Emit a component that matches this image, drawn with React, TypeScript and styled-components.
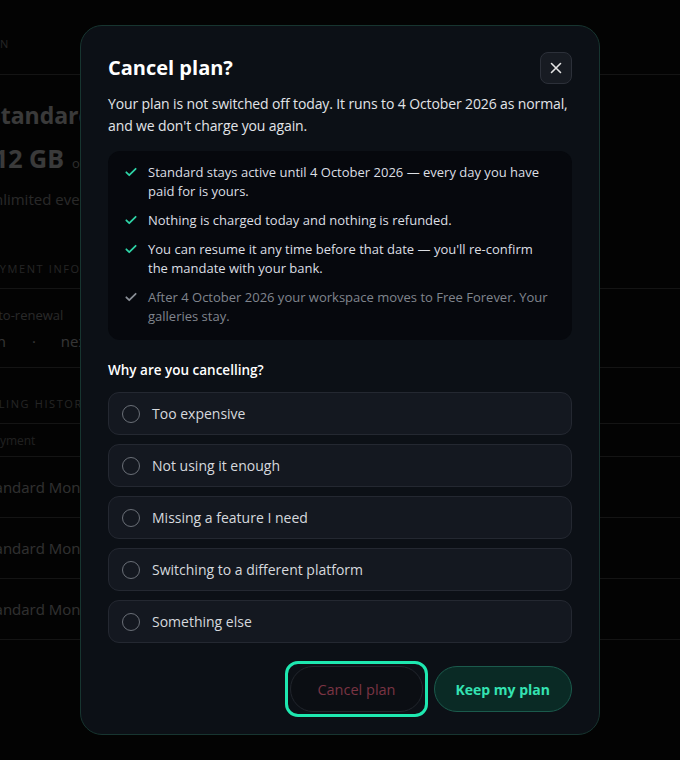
import React, { useState } from 'react';
import styled, { createGlobalStyle } from 'styled-components';

const GlobalStyle = createGlobalStyle`
  html, body {
    margin: 0;
    padding: 0;
    background: #0e0e0e;
    font-family: "Open Sans", "DejaVu Sans", sans-serif;
    -webkit-font-smoothing: antialiased;
  }
  * { box-sizing: border-box; }
`;

/* ---------- page behind the dialog ---------- */

const Page = styled.div`
  width: 680px;
  height: 760px;
  overflow: hidden;
  background: #0e0e0e;
  color: #f2f2f2;
`;

const Section = styled.section`
  border-bottom: 1px solid #555;
`;

const SectionLabel = styled.div<{ $pad: string; $shift: number }>`
  padding: ${p => p.$pad};
  margin-left: ${p => p.$shift}px;
  font-size: 11px;
  letter-spacing: 1.6px;
  text-transform: uppercase;
  color: #9a9a9a;
  font-weight: 500;
  white-space: nowrap;
`;

const Block = styled.div`
  padding: 22px 0 24px;
  white-space: nowrap;
`;

const PlanName = styled.div`
  margin-left: -12px;
  font-size: 23px;
  font-weight: 700;
  line-height: 36px;
`;

const Storage = styled.div`
  margin-top: 8px;
  display: flex;
  align-items: baseline;
  gap: 8px;
  margin-left: -6px;
  font-size: 25px;
  font-weight: 700;
  span {
    font-size: 13px;
    font-weight: 400;
    color: #bbb;
  }
`;

const Muted = styled.div`
  margin-top: 14px;
  margin-left: -17px;
  font-size: 15px;
  color: #aaa;
`;

const InfoRow = styled.div`
  margin-left: -15px;
  padding: 13px 0 13px;
  line-height: 26px;
  white-space: nowrap;
  .k { font-size: 13px; color: #aaa; margin-left: -3px; }
  .v { font-size: 15px; color: #ddd; }
  .dot { margin: 0 25px 0 26px; }
`;

const TableRow = styled.div<{ $head?: boolean }>`
  border-bottom: 1px solid #555;
  margin-left: ${p => (p.$head ? '-14px' : '-19px')};
  height: ${p => (p.$head ? '33px' : '61px')};
  display: flex;
  align-items: center;
  white-space: nowrap;
  font-size: ${p => (p.$head ? '12px' : '15px')};
  color: ${p => (p.$head ? '#888' : '#c8c8c8')};
`;

/* ---------- dialog ---------- */

const Overlay = styled.div`
  position: fixed;
  inset: 0;
  background: rgba(0, 0, 0, 0.76);
  display: flex;
  align-items: center;
  justify-content: center;
`;

const Dialog = styled.div`
  width: 520px;
  height: 710px;
  background: #0c1016;
  border: 1px solid #173530;
  border-radius: 22px;
  padding: 25px 27px 22px;
  display: flex;
  flex-direction: column;
  color: #e8eaed;
`;

const Header = styled.div`
  display: flex;
  align-items: center;
  justify-content: space-between;
  height: 33px;
`;

const Title = styled.h2`
  margin: 0;
  font-size: 20px;
  font-weight: 700;
  color: #fff;
`;

const CloseButton = styled.button`
  width: 32px;
  height: 32px;
  border-radius: 8px;
  border: 1px solid #2c3039;
  background: #171b22;
  display: flex;
  align-items: center;
  justify-content: center;
  padding: 0;
  color: #e4e4e4;
`;

const Lead = styled.p`
  margin: 9px 0 0;
  font-size: 14px;
  line-height: 22px;
  letter-spacing: -0.12px;
  color: #e2e4e8;
`;

const Facts = styled.ul`
  list-style: none;
  margin: 14px 0 0;
  padding: 12px 16px 14px;
  background: #06080d;
  border-radius: 12px;
  display: flex;
  flex-direction: column;
  gap: 10px;
`;

const Fact = styled.li<{ $muted?: boolean }>`
  display: flex;
  gap: 10px;
  font-size: 13px;
  line-height: 19px;
  color: ${p => (p.$muted ? '#80858d' : '#dcdfe4')};
  svg {
    flex: none;
    margin-top: 2px;
    color: ${p => (p.$muted ? '#8a8f97' : '#2ed3a6')};
  }
`;

const Question = styled.div`
  margin-top: 20px;
  font-size: 13.5px;
  font-weight: 600;
  line-height: 20px;
  color: #fff;
`;

const Options = styled.div`
  margin-top: 12px;
  display: flex;
  flex-direction: column;
  gap: 9px;
`;

const Option = styled.label<{ $on: boolean }>`
  height: 43px;
  display: flex;
  align-items: center;
  gap: 12px;
  padding: 0 13px;
  border-radius: 11px;
  border: 1px solid ${p => (p.$on ? '#1d6a58' : '#242831')};
  background: #141820;
  font-size: 14px;
  color: #d6d9de;
  cursor: pointer;
`;

const Radio = styled.span<{ $on: boolean }>`
  width: 18px;
  height: 18px;
  border-radius: 50%;
  border: 1.5px solid ${p => (p.$on ? '#2ed3a6' : '#6a6f77')};
  box-shadow: ${p => (p.$on ? 'inset 0 0 0 3px #141820, inset 0 0 0 9px #2ed3a6' : 'none')};
`;

const Actions = styled.div`
  margin-top: auto;
  display: flex;
  justify-content: flex-end;
  gap: 11px;
`;

const Button = styled.button<{ $primary?: boolean; $focus?: boolean }>`
  position: relative;
  height: 46px;
  padding: 0 ${p => (p.$primary ? '21px' : '26px')};
  border-radius: 23px;
  font-family: inherit;
  font-size: ${p => (p.$primary ? '14px' : '14.5px')};
  font-weight: ${p => (p.$primary ? 700 : 500)};
  border: 1px solid ${p => (p.$primary ? '#1b5a4c' : '#21252c')};
  background: ${p => (p.$primary ? '#0a2a25' : '#0b0e13')};
  color: ${p => (p.$primary ? '#34e2b2' : '#7a3443')};
  &::after {
    content: ${p => (p.$focus ? "''" : 'none')};
    position: absolute;
    inset: -6px;
    border: 3px solid #1ee8b0;
    border-radius: 13px;
  }
`;

const Check = () => (
  <svg width="14" height="14" viewBox="0 0 24 24" fill="none" stroke="currentColor" strokeWidth="3" strokeLinecap="round" strokeLinejoin="round">
    <path d="M4 12.5l5 5L20 6.5" />
  </svg>
);

const reasons = [
  'Too expensive',
  'Not using it enough',
  'Missing a feature I need',
  'Switching to a different platform',
  'Something else',
];

export default function App() {
  const [reason, setReason] = useState<string | null>(null);

  return (
    <>
      <GlobalStyle />
      <Page>
        <Section>
          <SectionLabel $pad="36px 0 23px" $shift={-24}>Plan</SectionLabel>
        </Section>
        <Block>
          <PlanName>Standard · Monthly</PlanName>
          <Storage>
            12 GB <span>of storage</span>
          </Storage>
          <Muted>Unlimited events and galleries</Muted>
        </Block>
        <Section>
          <SectionLabel $pad="28px 0 12px" $shift={-17}>Payment information</SectionLabel>
        </Section>
        <Section>
          <InfoRow>
            <div className="k">Auto-renewal</div>
            <div className="v">
              On<span className="dot">·</span>next charge 4 October 2026
            </div>
          </InfoRow>
        </Section>
        <Section>
          <SectionLabel $pad="28px 0 12px" $shift={-22}>Billing history</SectionLabel>
        </Section>
        <TableRow $head>Payment</TableRow>
        <TableRow>Standard Monthly</TableRow>
        <TableRow>Standard Monthly</TableRow>
        <TableRow>Standard Monthly</TableRow>
      </Page>

      <Overlay>
        <Dialog role="dialog" aria-labelledby="cancel-title">
          <Header>
            <Title id="cancel-title">Cancel plan?</Title>
            <CloseButton aria-label="Close">
              <svg width="12" height="12" viewBox="0 0 12 12" stroke="currentColor" strokeWidth="1.6" strokeLinecap="round">
                <path d="M1.5 1.5l9 9M10.5 1.5l-9 9" />
              </svg>
            </CloseButton>
          </Header>
          <Lead>
            Your plan is not switched off today. It runs to 4 October 2026 as normal, and we don't charge you again.
          </Lead>
          <Facts>
            <Fact>
              <Check />
              <span>Standard stays active until 4 October 2026 — every day you have paid for is yours.</span>
            </Fact>
            <Fact>
              <Check />
              <span>Nothing is charged today and nothing is refunded.</span>
            </Fact>
            <Fact>
              <Check />
              <span>You can resume it any time before that date — you'll re-confirm the mandate with your bank.</span>
            </Fact>
            <Fact $muted>
              <Check />
              <span>After 4 October 2026 your workspace moves to Free Forever. Your galleries stay.</span>
            </Fact>
          </Facts>
          <Question>Why are you cancelling?</Question>
          <Options>
            {reasons.map(r => (
              <Option key={r} $on={reason === r} onClick={() => setReason(r)}>
                <Radio $on={reason === r} />
                {r}
              </Option>
            ))}
          </Options>
          <Actions>
            <Button $focus>Cancel plan</Button>
            <Button $primary>Keep my plan</Button>
          </Actions>
        </Dialog>
      </Overlay>
    </>
  );
}
